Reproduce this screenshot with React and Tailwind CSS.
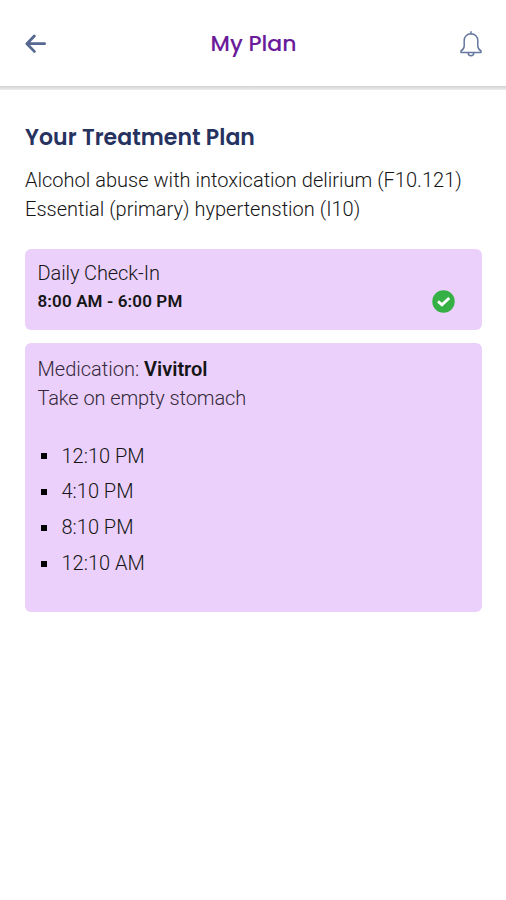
const diagnoses = [
  "Alcohol abuse with intoxication delirium (F10.121)",
  "Essential (primary) hypertenstion (I10)",
];

const doses = ["12:10 PM", "4:10 PM", "8:10 PM", "12:10 AM"];

export default function App() {
  return (
    <div className="min-h-screen w-full bg-white font-[Roboto,sans-serif] text-[#151515]">
      <Header title="My Plan" />

      <main className="pt-[34px] pr-6 pl-[25px]">
        <h2 className="font-[Poppins,Inter,sans-serif] text-[22px] leading-7 font-semibold tracking-[0.04px] whitespace-nowrap text-[#26325f]">
          Your Treatment Plan
        </h2>
        <div className="mt-[14px] text-[20px] leading-[29px] font-light tracking-[0.02px] whitespace-nowrap">
          {diagnoses.map((item) => (
            <p key={item}>{item}</p>
          ))}
        </div>

        <section className="mt-[25px] flex h-[80.5px] justify-between rounded-md bg-[#ebd0fb] pt-[10px] pr-[27px] pl-[12.5px]">
          <div>
            <p className="text-[20px] leading-[28px] font-light tracking-[-0.1px]">
              Daily Check-In
            </p>
            <p className="text-[17px] leading-[28px] font-semibold tracking-[0.13px]">
              8:00 AM - 6:00 PM
            </p>
          </div>
          <CheckBadge />
        </section>

        <section className="mt-[13px] h-[269px] rounded-md bg-[#ebd0fb] px-[12.5px] pt-[12.5px]">
          <p className="text-[20px] leading-[29px] font-light text-[#33293a]">
            Medication:{" "}
            <span className="font-semibold text-[#151515]">Vivitrol</span>
          </p>
          <p className="text-[20px] leading-[29px] font-light tracking-[-0.1px] text-[#33293a]">
            Take on empty stomach
          </p>
          <ul className="mt-[25.5px] text-[20px] leading-[35.8px] font-light">
            {doses.map((time) => (
              <li key={time} className="flex items-center">
                <span className="ml-[3px] size-[6px] bg-black" />
                <span className="ml-[15px]">{time}</span>
              </li>
            ))}
          </ul>
        </section>
      </main>
    </div>
  );
}

const Header = ({ title }) => {
  return (
    <header className="flex h-[90px] flex-col">
      <div className="flex h-[86px] items-center justify-between pt-[2px] pr-6 pl-[25px]">
        <button aria-label="Back">
          <svg width="22" height="20" viewBox="0 0 22 20" fill="none">
            <path
              d="M9.3 2L1.9 9.7L9.3 17.4M2.2 9.7H19.6"
              stroke="#566791"
              strokeWidth="2.8"
              strokeLinecap="round"
              strokeLinejoin="round"
            />
          </svg>
        </button>
        <h1 className="font-[Poppins,Inter,sans-serif] text-[22px] leading-8 font-medium whitespace-nowrap text-[#6a1b9a]">
          {title}
        </h1>
        <button aria-label="Notifications">
          <svg width="22" height="26" viewBox="0 0 22 26" fill="none">
            <path
              d="M11 0.8V3M11 2.8C7 2.8 4.2 5.6 4.2 9.4V15C4.2 17.6 3.2 18.6 1 20V21.4H21V20C18.8 18.6 17.8 17.6 17.8 15V9.4C17.8 5.6 15 2.8 11 2.8Z"
              stroke="#65779f"
              strokeWidth="1.5"
              strokeLinecap="round"
              strokeLinejoin="round"
            />
            <path
              d="M8.2 21.8C8.2 23.6 9.4 24.8 11 24.8C12.6 24.8 13.8 23.6 13.8 21.8"
              stroke="#65779f"
              strokeWidth="1.5"
            />
          </svg>
        </button>
      </div>
      <div className="h-1 bg-linear-to-b from-[#d2d2d2] to-[#ececec]" />
    </header>
  );
};

const CheckBadge = () => {
  return (
    <svg className="mt-[31px]" width="23" height="23" viewBox="0 0 23 23">
      <circle cx="11.5" cy="11.5" r="11.2" fill="#34b044" />
      <path
        d="M6 11.3L10 14.8L17.2 8"
        fill="none"
        stroke="white"
        strokeWidth="2.9"
      />
    </svg>
  );
};
